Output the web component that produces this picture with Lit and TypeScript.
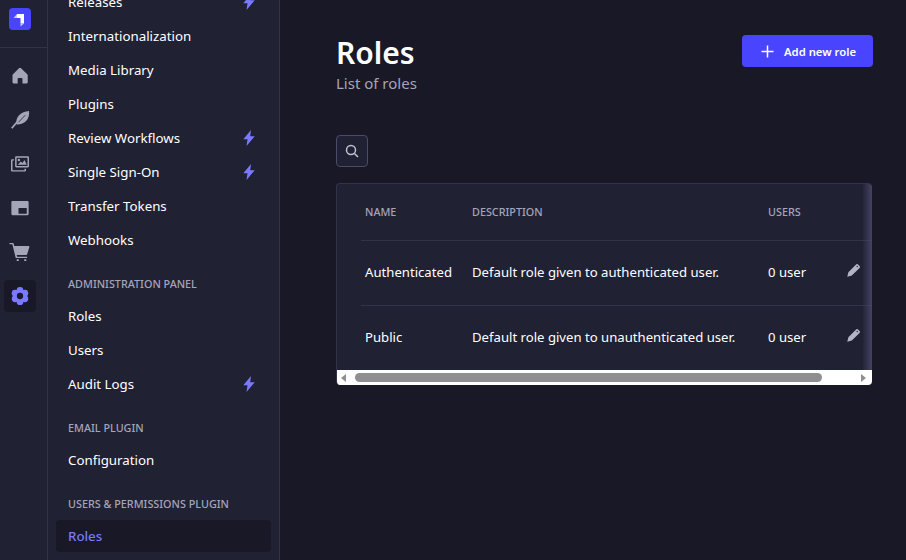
import { LitElement, css, html, svg } from "lit";
import { customElement } from "lit/decorators.js";

type NavItem = { label: string; bolt?: boolean; active?: boolean };
type NavSection = { title?: string; items: NavItem[] };

const sections: NavSection[] = [
  {
    items: [
      { label: "Releases", bolt: true },
      { label: "Internationalization" },
      { label: "Media Library" },
      { label: "Plugins" },
      { label: "Review Workflows", bolt: true },
      { label: "Single Sign-On", bolt: true },
      { label: "Transfer Tokens" },
      { label: "Webhooks" },
    ],
  },
  {
    title: "ADMINISTRATION PANEL",
    items: [{ label: "Roles" }, { label: "Users" }, { label: "Audit Logs", bolt: true }],
  },
  { title: "EMAIL PLUGIN", items: [{ label: "Configuration" }] },
  { title: "USERS & PERMISSIONS PLUGIN", items: [{ label: "Roles", active: true }] },
];

const roles = [
  { name: "Authenticated", description: "Default role given to authenticated user.", users: "0 user" },
  { name: "Public", description: "Default role given to unauthenticated user.", users: "0 user" },
];

const railIcons = [
  // home
  svg`<path d="M10.600 1.800a2 2 0 0 1 2.800 0l8.300 7.800c.4.3.6.8.6 1.300V20a2 2 0 0 1-2 2h-5v-6.200a1.300 1.300 0 0 0-1.300-1.300h-3.800a1.300 1.300 0 0 0-1.300 1.300V22H4a2 2 0 0 1-2-2v-9.100c0-.5.2-1 .6-1.300z"/>`,
  // feather
  svg`<path d="M24 0c.8 5.200-.6 10.200-4.200 13.800-2.800 2.800-6.800 4.500-12.300 4.300-1-4.800 0-9 3.300-12.300C14.200 2.400 18.700.2 24 0z"/><path d="M1 23L9.500 13" stroke="#a5a5ba" stroke-width="2.400" fill="none"/><path d="M19 5.500L10 15" stroke="#212134" stroke-width="1" fill="none"/>`,
  // media
  svg`<path fill-rule="evenodd" d="M7 1.500h15.500A1.500 1.500 0 0 1 24 3v12a1.500 1.500 0 0 1-1.500 1.500H7A1.500 1.500 0 0 1 5.500 15V3A1.500 1.500 0 0 1 7 1.500zM7.500 3.500v11h14.500v-11zM9 13l4-4.200 2.200 2 2.800-4.300 3 6.500zM10.500 5a1.600 1.600 0 1 1 0 3.200 1.600 1.600 0 0 1 0-3.200z"/><path fill-rule="evenodd" d="M1.500 5.500h2.500v1.800H2v13h16v-2h2v2.200a1.500 1.500 0 0 1-1.500 1.500h-17A1.500 1.500 0 0 1 0 20.500V7a1.500 1.500 0 0 1 1.500-1.500z"/>`,
  // layout
  svg`<path fill-rule="evenodd" d="M2 2.500h20A1.500 1.500 0 0 1 23.500 4v16a1.500 1.500 0 0 1-1.500 1.500H2A1.500 1.500 0 0 1 .5 20V4A1.500 1.500 0 0 1 2 2.500zM10 12v7.500h11V12z"/>`,
  // cart
  svg`<path d="M-2 0h4.600c.4 0 .8.3.9.7L4.400 4h19.300c.6 0 1 .6.8 1.200l-2.800 9.600c-.2.7-.8 1.200-1.500 1.200H7.600l.6 2.200h13.300v1.800H7c-.4 0-.8-.3-.9-.7L1.800 1.800H-2z"/><rect x="7.500" y="21.500" width="3" height="2.500" rx=".6"/><rect x="17.500" y="21.500" width="3" height="2.500" rx=".6"/>`,
  // settings
  svg`<g><circle cx="12" cy="4.500" r="4.500"/><circle cx="18.500" cy="8.250" r="4.500"/><circle cx="18.500" cy="15.750" r="4.500"/><circle cx="12" cy="19.500" r="4.500"/><circle cx="5.500" cy="15.750" r="4.500"/><circle cx="5.500" cy="8.250" r="4.500"/><circle cx="12" cy="12" r="8"/></g><circle cx="12" cy="12" r="4.200" fill="#181826"/>`,
];

@customElement("app-root")
export class AppRoot extends LitElement {
  static styles = css`
    :host {
      display: flex;
      height: 560px;
      overflow: hidden;
      background: #181826;
      font-family: "Noto Sans", sans-serif;
      font-size: 13.3px;
      color: #ffffff;
    }

    .rail {
      flex: none;
      width: 47px;
      background: #212134;
      border-right: 1px solid #32324d;
      display: flex;
      flex-direction: column;
    }

    .logo-wrap {
      height: 48px;
      border-bottom: 1px solid #32324d;
      padding: 8px 0 0 9px;
      box-sizing: border-box;
    }

    .logo {
      width: 22px;
      height: 22px;
      border-radius: 4px;
      background: #4945ff;
      display: block;
    }

    .rail-icons {
      display: flex;
      flex-direction: column;
      align-items: flex-start;
      gap: 12px;
      padding: 12px 0 0 4px;
    }

    .rail-icon {
      width: 32px;
      height: 32px;
      border-radius: 4px;
      display: flex;
      align-items: center;
      justify-content: center;
      fill: #a5a5ba;
    }

    .rail-icon.active {
      background: #181826;
      fill: #7b79ff;
    }

    .rail-icon svg {
      width: 18px;
      height: 18px;
      overflow: visible;
    }

    .sidebar {
      flex: none;
      width: 231px;
      background: #212134;
      border-right: 1px solid #32324d;
      overflow: hidden;
    }

    .nav {
      margin-top: -14px;
      padding: 0 8px;
    }

    .nav-title {
      margin: 20px 0 8px;
      padding-left: 12px;
      height: 16px;
      line-height: 16px;
      font-size: 10.8px;
      font-weight: 500;
      color: #a5a5ba;
    }

    .nav-items {
      display: flex;
      flex-direction: column;
      gap: 2px;
    }

    .nav-item {
      height: 32px;
      padding: 0 16px 0 12px;
      border-radius: 4px;
      display: flex;
      align-items: center;
      justify-content: space-between;
    }

    .nav-item.active {
      background: #181826;
      color: #7b79ff;
      font-weight: 500;
    }

    .bolt {
      width: 12px;
      height: 16px;
      fill: #7b79ff;
    }

    .main {
      flex: 1;
      min-width: 0;
      padding: 35px 33px 0 56px;
    }

    .header {
      display: flex;
      justify-content: space-between;
      align-items: flex-start;
    }

    h1 {
      margin: 0;
      font-size: 30px;
      line-height: 36px;
      font-weight: 600;
    }

    .subtitle {
      font-size: 15px;
      line-height: 24px;
      color: #a5a5ba;
    }

    .add {
      height: 32px;
      width: 131px;
      box-sizing: border-box;
      padding-left: 2px;
      border-radius: 4px;
      background: #4945ff;
      display: flex;
      align-items: center;
      justify-content: center;
      gap: 10px;
      font-size: 11.3px;
      font-weight: 600;
    }

    .add svg {
      width: 13px;
      height: 13px;
      stroke: #ffffff;
      stroke-width: 1.600;
    }

    .search {
      margin-top: 40px;
      width: 32px;
      height: 32px;
      box-sizing: border-box;
      border: 1px solid #4a4a6a;
      border-radius: 4px;
      background: #212134;
      display: flex;
      align-items: center;
      justify-content: center;
    }

    .search svg {
      width: 14px;
      height: 14px;
      fill: none;
      stroke: #c0c0cf;
      stroke-width: 1.500;
    }

    .table {
      position: relative;
      margin: 16px 1px 0 0;
      background: #212134;
      border: 1px solid #32324d;
      border-bottom: 0;
      border-right: 0;
      border-radius: 4px;
      overflow: hidden;
    }

    .row {
      display: grid;
      grid-template-columns: 107px 296px 79px 1fr;
      align-items: center;
      margin-left: 24px;
      padding: 0 0 2px 4px;
      box-sizing: border-box;
      height: 65px;
      border-top: 1px solid #32324d;
      font-size: 13.15px;
    }

    .row.head {
      height: 56px;
      padding-bottom: 1px;
      border-top: 0;
      font-size: 10.8px;
      font-weight: 500;
      color: #a5a5ba;
    }

    .pencil {
      width: 13px;
      height: 13px;
      fill: #b4b4c6;
      margin: 0 0 4px 0;
    }

    .shade {
      position: absolute;
      top: 0;
      right: 0;
      bottom: 15px;
      width: 10px;
      background: linear-gradient(to right, rgba(74, 74, 106, 0), rgba(74, 74, 106, 0.85));
    }

    .scrollbar {
      height: 15px;
      background: #ffffff;
      display: flex;
      align-items: center;
      justify-content: space-between;
      padding: 0 6px 0 4px;
    }

    .arrow {
      width: 0;
      height: 0;
      border-top: 4px solid transparent;
      border-bottom: 4px solid transparent;
    }

    .arrow.left {
      border-right: 5px solid #8f8f8f;
    }

    .arrow.right {
      border-left: 5px solid #8f8f8f;
    }

    .thumb {
      height: 9px;
      width: 467px;
      margin: 0 39px 0 8px;
      border-radius: 5px;
      background: #8f8f8f;
    }
  `;

  private renderSection(section: NavSection) {
    return html`
      ${section.title ? html`<div class="nav-title">${section.title}</div>` : ""}
      <div class="nav-items">
        ${section.items.map(
          (item) => html`
            <div class="nav-item ${item.active ? "active" : ""}">
              <span>${item.label}</span>
              ${item.bolt
                ? html`<svg class="bolt" viewBox="0 0 12 16"><path d="M8 0L.3 9.200h4.200L3.500 16l8.200-9.700H7.200z"/></svg>`
                : ""}
            </div>
          `
        )}
      </div>
    `;
  }

  render() {
    return html`
      <div class="rail">
        <div class="logo-wrap">
          <svg class="logo" viewBox="0 0 22 22">
            <path fill="#ffffff" d="M8 6h7v9.500h-3.500V10H8z" />
            <path fill="#c9c8ff" d="M8 6v4H4.500zM11.500 15.500h3.500l-3.500 3z" />
          </svg>
        </div>
        <div class="rail-icons">
          ${railIcons.map(
            (icon, i) => html`
              <div class="rail-icon ${i === 5 ? "active" : ""}"><svg viewBox="0 0 24 24">${icon}</svg></div>
            `
          )}
        </div>
      </div>
      <div class="sidebar">
        <div class="nav">${sections.map((s) => this.renderSection(s))}</div>
      </div>
      <div class="main">
        <div class="header">
          <div>
            <h1>Roles</h1>
            <div class="subtitle">List of roles</div>
          </div>
          <div class="add">
            <svg viewBox="0 0 14 14"><path d="M7 .5v13M.5 7h13" /></svg>
            <span>Add new role</span>
          </div>
        </div>
        <div class="search">
          <svg viewBox="0 0 14 14"><circle cx="6" cy="6" r="4.500" /><path d="M9.500 9.500L13 13" /></svg>
        </div>
        <div class="table">
          <div class="row head">
            <span>NAME</span>
            <span>DESCRIPTION</span>
            <span>USERS</span>
            <span></span>
          </div>
          ${roles.map(
            (role) => html`
              <div class="row">
                <span>${role.name}</span>
                <span>${role.description}</span>
                <span>${role.users}</span>
                <svg class="pencil" viewBox="0 0 14 14">
                  <path fill-rule="evenodd" d="M9.800.5a1.500 1.500 0 0 1 2.100 0l1.600 1.600a1.500 1.500 0 0 1 0 2.100L5.200 12.500.3 13.700l1.200-4.900zM10.500 2.200a.7.7 0 1 0 1 1 .7.7 0 0 0-1-1z" />
                </svg>
              </div>
            `
          )}
          <div class="shade"></div>
          <div class="scrollbar">
            <div class="arrow left"></div>
            <div class="thumb"></div>
            <div class="arrow right"></div>
          </div>
        </div>
      </div>
    `;
  }
}
